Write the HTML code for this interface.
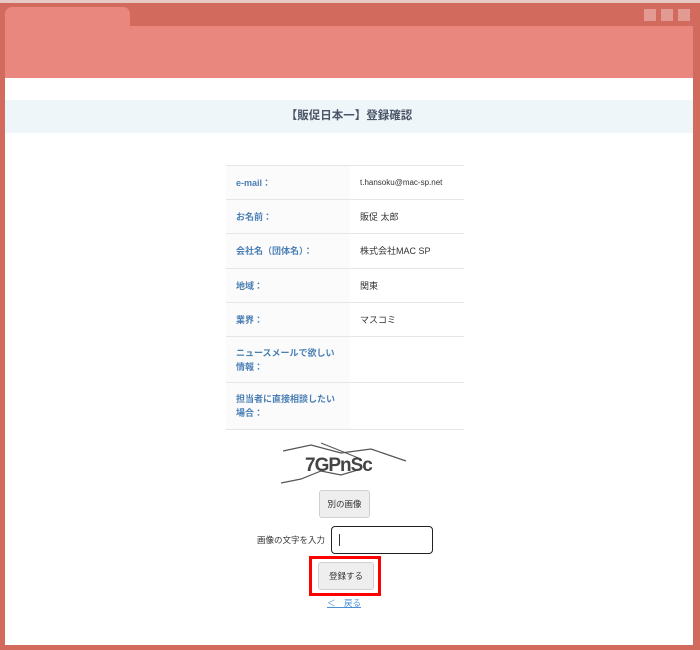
<!DOCTYPE html>
<html><head><meta charset="utf-8"><style>
*{margin:0;padding:0;box-sizing:border-box}
body{width:700px;height:650px;background:#d26a5e;position:relative;overflow:hidden;font-family:"Liberation Sans","Noto Sans CJK JP",sans-serif;}
.topline{position:absolute;left:0;top:0;width:700px;height:3px;background:#e6c9c4}
.tab{position:absolute;left:5px;top:7px;width:125px;height:22px;background:#e9877f;border-radius:7px 7px 0 0}
.sq{position:absolute;top:9px;width:12px;height:12px;background:#e39a93}
.head{position:absolute;left:5px;top:26px;width:688px;height:52px;background:#e9877f}
.content{position:absolute;left:5px;top:78px;width:688px;height:567px;background:#fff}
.title{position:absolute;left:0;top:22px;width:688px;height:33px;background:#eff6fa;text-align:center;line-height:33px;font-size:11.5px;font-weight:bold;color:#4b5568}
table{position:absolute;left:221px;top:87px;width:238px;border-collapse:collapse;font-size:9px;table-layout:fixed}
td{border-top:1px solid #e6e6e6;border-bottom:1px solid #e6e6e6;vertical-align:middle;line-height:14px}
td.l{width:124px;background:#fbfbfb;color:#4a7fb5;font-weight:bold;padding:0 0 0 10px;white-space:nowrap}
td.v{color:#333;padding:0 10px}
.cap{position:absolute;left:276px;top:363px;width:128px;height:46px}
.btn{position:absolute;background:#eee;border:1px solid #d0d0d0;border-radius:3px;font-size:8.5px;color:#333;text-align:center}
</style></head><body>
<div class="topline"></div>
<div class="tab"></div>
<div class="sq" style="left:644px"></div><div class="sq" style="left:661px"></div><div class="sq" style="left:678px"></div>
<div class="head"></div>
<div class="content">
<div class="title">【販促日本一】登録確認</div>
<table>
<tr style="height:34px"><td class="l">e-mail：</td><td class="v" style="font-size:8px">t.hansoku@mac-sp.net</td></tr>
<tr style="height:34px"><td class="l">お名前：</td><td class="v">販促 太郎</td></tr>
<tr style="height:35px"><td class="l">会社名（団体名）：</td><td class="v">株式会社MAC SP</td></tr>
<tr style="height:34px"><td class="l">地域：</td><td class="v">関東</td></tr>
<tr style="height:34px"><td class="l">業界：</td><td class="v">マスコミ</td></tr>
<tr style="height:46px"><td class="l">ニュースメールで欲しい<br>情報：</td><td class="v"></td></tr>
<tr style="height:47px"><td class="l">担当者に直接相談したい<br>場合：</td><td class="v"></td></tr>
</table>
<svg class="cap" viewBox="0 0 128 46">
<path d="M2 10 L30 4 L60 12 L90 8 L125 20" stroke="#555" fill="none" stroke-width="1.2"/>
<path d="M0 42 L20 38 L40 30 L60 34 L80 28" stroke="#555" fill="none" stroke-width="1.2"/>
<path d="M40 2 L80 18" stroke="#555" fill="none" stroke-width="1"/>
<text x="24" y="30" font-family="Liberation Sans" font-size="19" font-weight="bold" fill="#444" letter-spacing="-1">7GPnSc</text>
</svg>
<div class="btn" style="left:314px;top:412px;width:51px;height:28px;line-height:26px">別の画像</div>
<div style="position:absolute;left:252px;top:456px;font-size:8.5px;color:#333">画像の文字を入力</div>
<div style="position:absolute;left:326px;top:448px;width:102px;height:28px;border:1.5px solid #222;border-radius:4px"><div style="position:absolute;left:7px;top:7px;width:1px;height:12px;background:#333"></div></div>
<div style="position:absolute;left:304px;top:478px;width:72px;height:40px;border:3px solid #f00"></div>
<div class="btn" style="left:313px;top:484px;width:56px;height:28px;line-height:26px">登録する</div>
<div style="position:absolute;left:322px;top:519px;font-size:8.5px;color:#4a90d9;text-decoration:underline">＜　戻る</div>
</div>
</body></html>
